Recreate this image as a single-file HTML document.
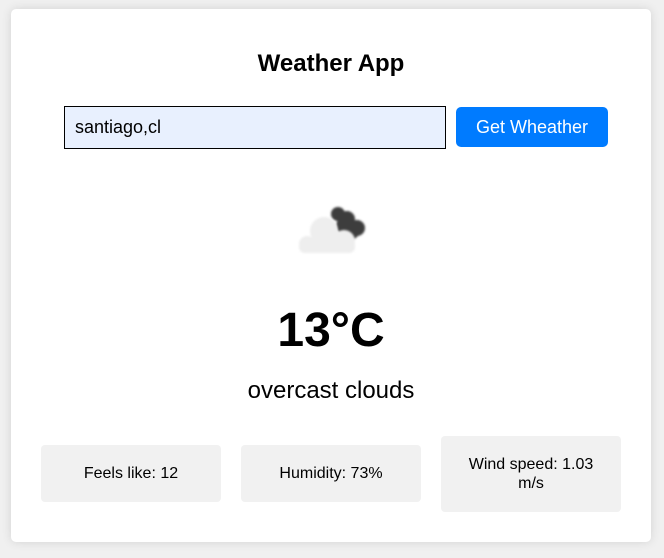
<!DOCTYPE html>
<html><head><style>
body{margin:0;width:664px;height:558px;background:#f0f0f0;font-family:"Liberation Sans",Arial,sans-serif;position:relative;overflow:hidden}
.card{position:absolute;left:11px;top:9px;width:640px;height:533px;background:#fff;border-radius:5px;box-shadow:0 0 10px rgba(0,0,0,.12)}
h1{position:absolute;left:0;right:0;top:41px;margin:0;text-align:center;font-size:24px;font-weight:bold;color:#000}
.in{position:absolute;left:53px;top:97px;border:1px solid #000;background:#e8f0fe;font-size:18px;line-height:41px;padding-left:10px;box-sizing:border-box;width:382px;height:43px}
.btn{position:absolute;left:445px;top:98px;width:152px;height:40px;background:#007bff;color:#fff;border-radius:5px;font-size:18px;line-height:40px;text-align:center}
.t{position:absolute;left:0;right:0;top:294px;text-align:center;font-size:48px;font-weight:bold;line-height:56px}
.d{position:absolute;left:0;right:0;top:368px;text-align:center;font-size:24px;line-height:28px}
.b{position:absolute;background:#f1f1f1;border-radius:4px;font-size:16px;text-align:center;display:flex;align-items:center;justify-content:center;line-height:19px}
</style></head><body>
<div class="card">
<h1>Weather App</h1>
<div class="in">santiago,cl</div>
<div class="btn">Get Wheather</div>
<svg style="position:absolute;left:280px;top:192px" width="84" height="54" viewBox="0 0 84 54">
<defs><filter id="bl"><feGaussianBlur stdDeviation="1"/></filter></defs>
<g fill="#3d3d3d" filter="url(#bl)"><circle cx="47" cy="13" r="7"/><circle cx="56" cy="18" r="8"/><circle cx="66" cy="27" r="8"/><circle cx="61" cy="31" r="7"/><circle cx="54" cy="25" r="9"/></g>
<g fill="#eeeeee" filter="url(#bl)"><circle cx="33" cy="30" r="14"/><circle cx="16" cy="43" r="8"/><circle cx="53" cy="40" r="11"/><rect x="8" y="38" width="56" height="14" rx="6"/></g>
</svg>
<div class="t">13°C</div>
<div class="d">overcast clouds</div>
<div class="b" style="left:30px;top:436px;width:180px;height:57px">Feels like: 12</div>
<div class="b" style="left:230px;top:436px;width:180px;height:57px">Humidity: 73%</div>
<div class="b" style="left:430px;top:427px;width:180px;height:76px;padding:0 22px;box-sizing:border-box">Wind speed: 1.03 m/s</div>
</div>
</body></html>
